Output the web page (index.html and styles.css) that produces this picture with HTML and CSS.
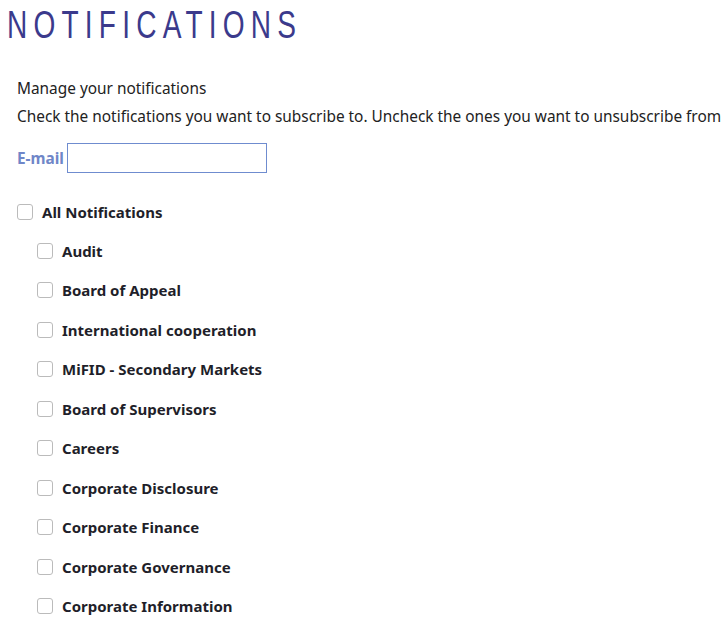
FILE: index.html
```html
<!DOCTYPE html>
<html>
<head>
<meta charset="utf-8">
<link rel="stylesheet" href="styles.css">
</head>
<body>
<h1 class="title"><span class="title-text">NOTIFICATIONS</span></h1>
<div class="content">
  <p class="intro">Manage your notifications</p>
  <p class="intro">Check the notifications you want to subscribe to. Uncheck the ones you want to unsubscribe from</p>
  <div class="email-row">
    <label class="email-label" for="email">E-mail</label>
    <input class="email-input" id="email" type="text">
  </div>
  <ul class="list">
    <li class="item top"><span class="box"></span><span class="name">All Notifications</span></li>
    <li class="item sub"><span class="box"></span><span class="name">Audit</span></li>
    <li class="item sub"><span class="box"></span><span class="name">Board of Appeal</span></li>
    <li class="item sub"><span class="box"></span><span class="name">International cooperation</span></li>
    <li class="item sub"><span class="box"></span><span class="name">MiFID - Secondary Markets</span></li>
    <li class="item sub"><span class="box"></span><span class="name">Board of Supervisors</span></li>
    <li class="item sub"><span class="box"></span><span class="name">Careers</span></li>
    <li class="item sub"><span class="box"></span><span class="name">Corporate Disclosure</span></li>
    <li class="item sub"><span class="box"></span><span class="name">Corporate Finance</span></li>
    <li class="item sub"><span class="box"></span><span class="name">Corporate Governance</span></li>
    <li class="item sub"><span class="box"></span><span class="name">Corporate Information</span></li>
  </ul>
</div>
</body>
</html>
```
FILE: styles.css
```css
html, body {
  margin: 0;
  padding: 0;
  background: #fff;
  overflow: hidden;
}
body {
  font-family: "Noto Sans", "Open Sans", sans-serif;
  color: #222;
}
.title {
  margin: 0;
  padding: 3px 0 0 7px;
  font-family: "Liberation Sans", Arial, sans-serif;
  font-weight: normal;
  font-size: 39px;
  line-height: 44px;
  color: #3b3a8c;
  white-space: nowrap;
}
.title-text {
  display: inline-block;
  letter-spacing: 8.6px;
  transform: scaleX(0.72);
  transform-origin: 0 0;
}
.content {
  padding: 28px 0 0 17px;
}
.intro {
  margin: 0;
  font-size: 15.4px;
  line-height: 28px;
  white-space: nowrap;
  color: #222;
}
.email-row {
  display: flex;
  align-items: center;
  margin-top: 12px;
}
.email-label {
  font-weight: bold;
  font-size: 15.4px;
  color: #6f86c8;
  margin-right: 3px;
}
.email-input {
  box-sizing: border-box;
  width: 200px;
  height: 30px;
  border: 1px solid #6f8ccf;
  margin: 0;
  padding: 0 4px;
  outline: none;
}
.list {
  list-style: none;
  margin: 26px 0 0 0;
  padding: 0;
}
.item {
  display: flex;
  align-items: center;
  height: 39.5px;
}
.item.top {
  height: 39px;
  margin-top: -7px;
}
.item.sub {
  padding-left: 20px;
}
.box {
  box-sizing: border-box;
  width: 16px;
  height: 16px;
  border: 1px solid #bbb;
  border-radius: 3px;
  background: #fff;
  margin-right: 9px;
  flex: none;
}
.name {
  font-weight: bold;
  font-size: 15px;
  color: #1f1f2a;
}
```
